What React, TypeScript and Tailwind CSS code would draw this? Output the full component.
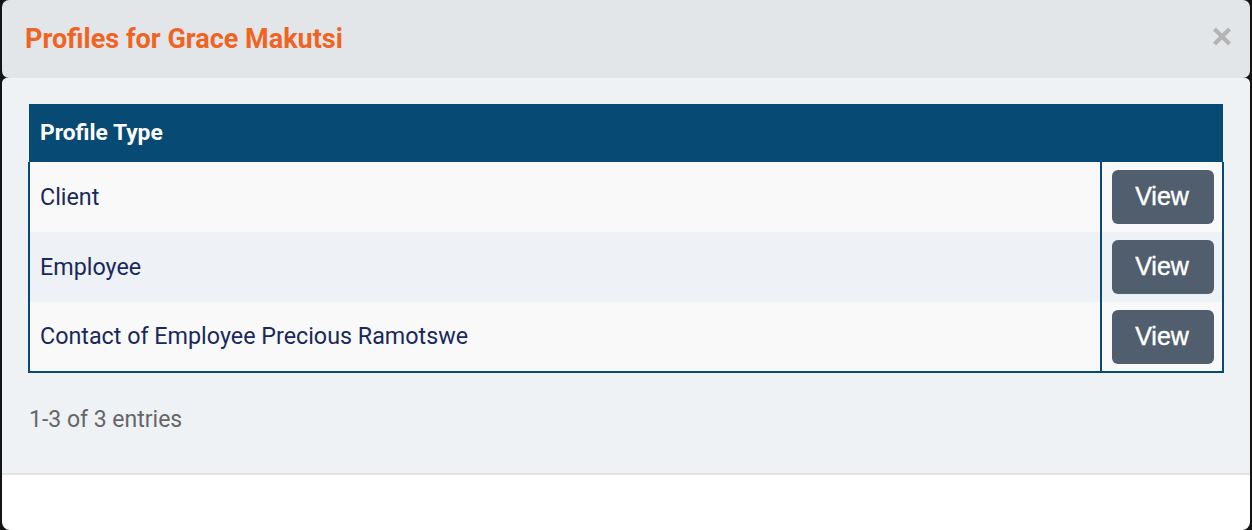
import * as React from 'react';

const rows = ['Client', 'Employee', 'Contact of Employee Precious Ramotswe'];

export default function App() {
    return (
        <div className="h-[530px] w-[1252px] bg-[#141414] px-[2px] font-['Roboto',sans-serif]">
            <div className="flex h-full flex-col">
                <div className="flex h-[78px] items-center justify-between rounded-[7px] bg-[#e3e6e9] pl-[23px] pr-[18px]">
                    <h4 className="text-[27px] font-bold text-[#ef6423]">Profiles for Grace Makutsi</h4>
                    <button className="mt-[-5px] text-[#b4b4b4]" aria-label="Close">
                        <svg width="20" height="19" viewBox="0 0 20 19">
                            <path d="M2.5 2 L17.5 17 M17.5 2 L2.5 17" stroke="currentColor" strokeWidth="4.2" />
                        </svg>
                    </button>
                </div>
                <div className="flex-1 rounded-t-[5px] border-b-2 border-[#e2e2e2] bg-[#eef2f5] px-[26px] pt-[26px]">
                    <table className="w-full border-collapse">
                        <thead>
                            <tr className="h-[58px] bg-[#074a73]">
                                <th colSpan={2} className="px-[11px] text-left text-[22.8px] font-bold text-white">
                                    Profile Type
                                </th>
                            </tr>
                        </thead>
                        <tbody className="border-2 border-t-0 border-[#074a73]">
                            {rows.map((r, i) => (
                                <tr key={r} className={i % 2 === 1 ? 'h-[70px] bg-[#eef1f5]' : 'h-[70px] bg-[#f9f9f9]'}>
                                    <td className="px-[10px] text-[23.3px] text-[#1a295b]">{r}</td>
                                    <td className="w-[120px] border-l-2 border-[#074a73] pl-[10px] pr-[8px]">
                                        <button className="flex h-[54px] w-[102px] items-center justify-center rounded-[6px] bg-[#505e6e] pr-[2px] font-['Liberation_Sans',sans-serif] text-[25px] text-white [-webkit-text-stroke:0.4px_white]">
                                            View
                                        </button>
                                    </td>
                                </tr>
                            ))}
                        </tbody>
                    </table>
                    <div className="mt-[30px] pl-[1px] text-[23px] text-[#666666]">1-3 of 3 entries</div>
                </div>
                <div className="h-[55px] rounded-b-[8px] bg-white" />
            </div>
        </div>
    );
}
